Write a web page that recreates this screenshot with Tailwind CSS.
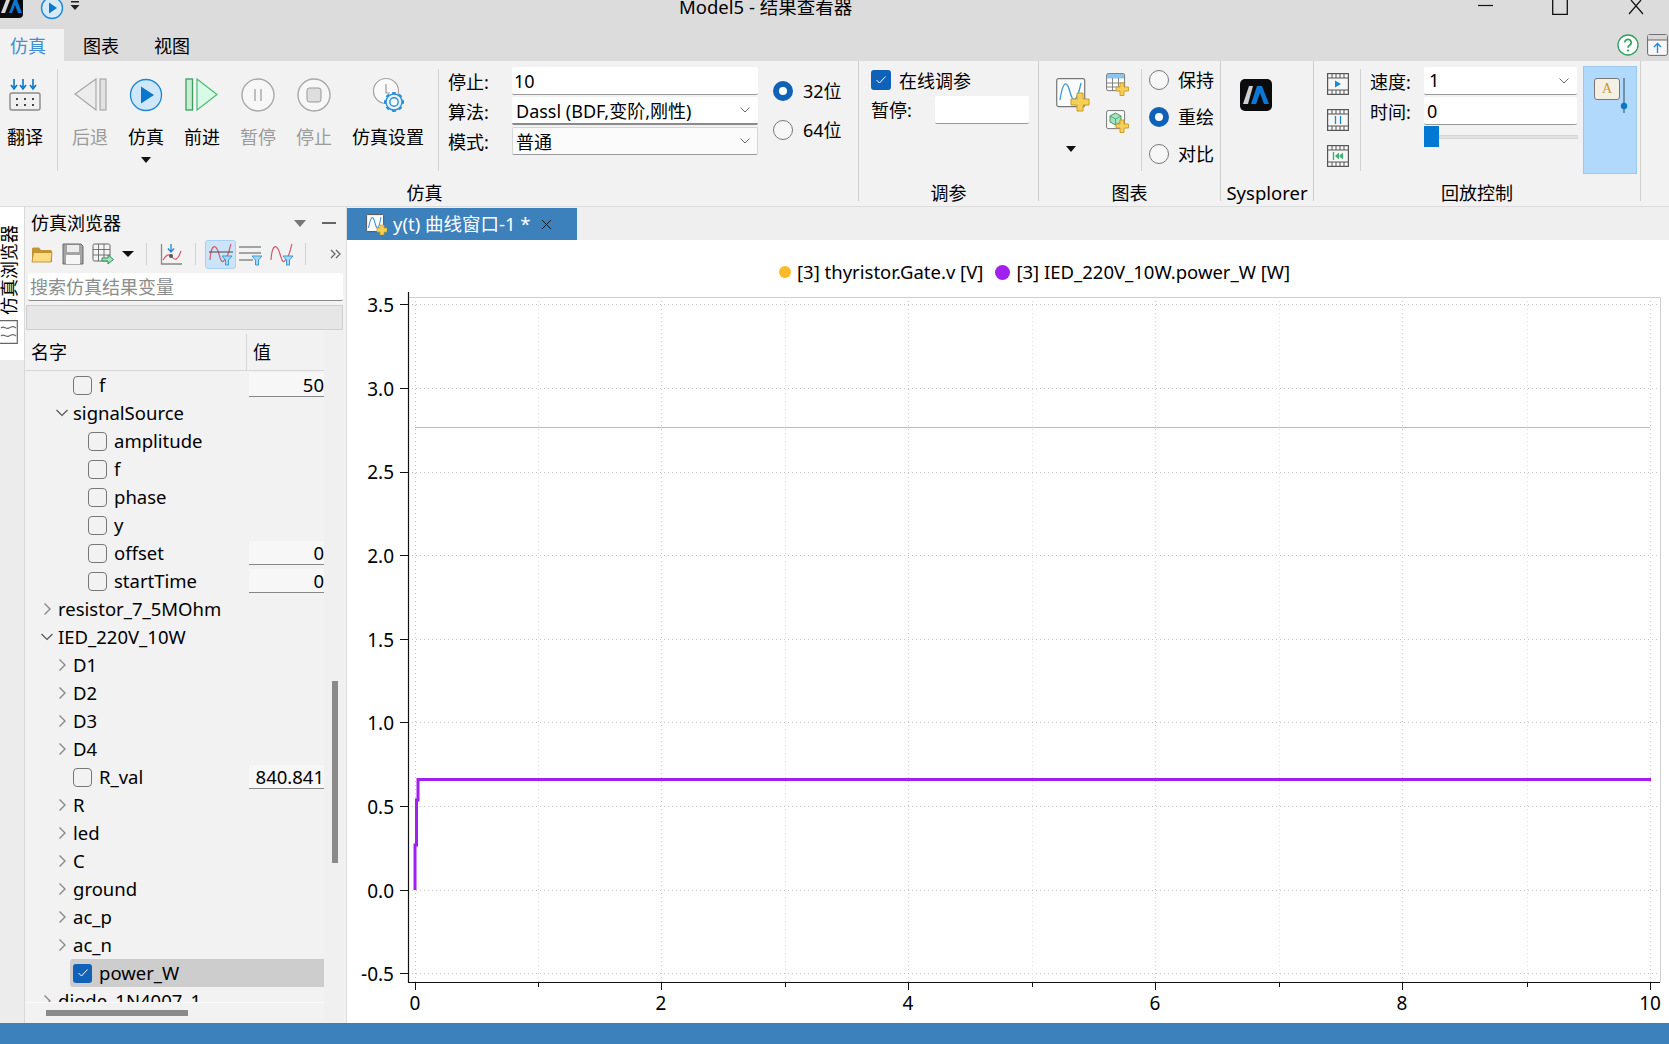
<!DOCTYPE html>
<html lang="zh">
<head>
    <meta charset="UTF-8">
    <title>Model5 - 结果查看器</title>
    <script src="https://cdn.jsdelivr.net/npm/@tailwindcss/browser@4"></script>
</head>
<body class="w-[1669px] h-[1044px] overflow-hidden flex flex-col bg-[#f2f2f2] text-[18px] text-black font-['Noto_Sans','Noto_Sans_CJK_SC',sans-serif]">

    <!-- Title bar -->
    <div class="h-[29px] flex items-start bg-[#dcdcdc] overflow-hidden shrink-0">
        <svg class="w-[23px] h-[19px] shrink-0" viewBox="0 0 23 19">
            <path d="M0 0H23V14a4 4 0 0 1-4 4H0Z" fill="#0b0b0d"/>
            <path d="M6 0H10L5 13H1Z" fill="#d8d8d8"/>
            <path d="M14 0H17L22 13H18L15 5L12 13H9Z" fill="#0a78d4"/>
        </svg>
        <svg class="w-[24px] h-[24px] ml-[17px] shrink-0 -mt-[4px]" viewBox="0 0 24 24">
            <circle cx="12" cy="12" r="10.5" fill="#d4e9fa" stroke="#2186d4" stroke-width="1.4"/>
            <path d="M9 6.5L17 12L9 17.5Z" fill="#0a78c8"/>
        </svg>
        <svg class="w-[10px] h-[12px] ml-[6px] shrink-0" viewBox="0 0 10 12">
            <rect x="1" y="1" width="8" height="1.5" fill="#222"/>
            <path d="M0.5 5H9.5L5 10Z" fill="#222"/>
        </svg>
        <div class="ml-[599px] -mt-[6px] text-[18.5px] leading-[26px] w-[799px] shrink-0 whitespace-nowrap">Model5 - 结果查看器</div>
        <svg class="w-[15px] h-[14px] shrink-0" viewBox="0 0 15 14"><path d="M0 5.5H15" stroke="#111" stroke-width="1.2"/></svg>
        <svg class="w-[16px] h-[15px] ml-[59px] shrink-0" viewBox="0 0 16 15"><path d="M0.7 0V14.3H15.3V0" fill="none" stroke="#111" stroke-width="1.3"/></svg>
        <svg class="w-[16px] h-[15px] ml-[60px] shrink-0" viewBox="0 0 16 15"><path d="M3 0L15 14M13 0L1 14" stroke="#111" stroke-width="1.2"/></svg>
    </div>

    <!-- Menu tabs -->
    <div class="h-[32px] flex items-stretch bg-[#dcdcdc] shrink-0">
        <div class="w-[64px] bg-[#f2f2f2] flex items-center pl-[10px] pt-[2px] text-[#3f8fd2]">仿真</div>
        <div class="ml-[19px] flex items-center pt-[2px]">图表</div>
        <div class="ml-[35px] flex items-center pt-[2px]">视图</div>
        <div class="ml-auto flex items-center">
            <svg class="w-[22px] h-[22px]" viewBox="0 0 22 22">
                <circle cx="11" cy="11" r="10" fill="#fff" stroke="#2f9e5c" stroke-width="1.3"/>
                <path d="M7.8 8.5a3.2 3.2 0 1 1 4.8 2.8c-1 .6-1.6 1.1-1.6 2.4" fill="none" stroke="#2f9e5c" stroke-width="1.7"/>
                <circle cx="11" cy="16.5" r="1.1" fill="#2f9e5c"/>
            </svg>
            <svg class="w-[21px] h-[22px] ml-[8px] mr-[1px]" viewBox="0 0 21 22">
                <rect x=".6" y=".6" width="19.8" height="20.8" rx="2" fill="#f7f7f7" stroke="#666"/>
                <rect x="1" y="1" width="19" height="5" fill="#d8d8d8"/>
                <path d="M1 6H20" stroke="#666"/>
                <path d="M10.5 19V10M7 13L10.5 9.5L14 13" fill="none" stroke="#1b87d8" stroke-width="1.3"/>
            </svg>
        </div>
    </div>

    <!-- Ribbon -->
    <div class="h-[146px] flex bg-[#f2f2f2] border-b border-[#dcdcdc] shrink-0">

        <!-- 仿真 group -->
        <div class="w-[859px] h-[140px] flex flex-col border-r border-[#cfcfcf] shrink-0">
            <div class="h-[118px] flex items-start shrink-0">
                <div class="w-[50px] shrink-0 flex flex-col items-center">
                    <svg class="w-[34px] h-[38px] mt-[15px]" viewBox="0 0 34 38">
                        <path d="M6 3V11M3 9L6 13L9 9M15 3V11M12 9L15 13L18 9M25 3V11M22 9L25 13L28 9" fill="none" stroke="#0a78c8" stroke-width="1.6"/>
                        <rect x="2" y="17" width="30" height="17" rx="2" fill="#f0f0f0" stroke="#8a8a8a" stroke-width="1.4"/>
                        <path d="M8 22h2v2H8ZM16 22h2v2h-2ZM24 22h2v2h-2ZM8 28h2v2H8ZM16 28h2v2h-2ZM24 28h2v2h-2Z" fill="#444"/>
                    </svg>
                    <div class="mt-[11px] leading-[24px]">翻译</div>
                </div>
                <div class="w-px h-[102px] mt-[8px] ml-[7px] bg-[#d2d2d2] shrink-0"></div>
                <div class="flex ml-[4px] shrink-0 items-start">
                    <div class="w-[56px] flex flex-col items-center text-[#9b9b9b]">
                        <svg class="w-[38px] h-[38px] mt-[15px]" viewBox="0 0 38 38">
                            <path d="M4 18L25 3V34Z" fill="#ececec" stroke="#a8a8a8" stroke-width="1.2"/>
                            <rect x="29" y="3" width="6" height="31" fill="#e2e2e2" stroke="#a8a8a8" stroke-width="1.2"/>
                        </svg>
                        <div class="mt-[11px] leading-[24px]">后退</div>
                    </div>
                    <div class="w-[56px] flex flex-col items-center">
                        <svg class="w-[38px] h-[38px] mt-[15px]" viewBox="0 0 38 38">
                            <circle cx="19" cy="19" r="15.5" fill="#cfe7fb" stroke="#1b87d4" stroke-width="1.3"/>
                            <path d="M14 10.5L27 19L14 27.5Z" fill="#0a78c8"/>
                        </svg>
                        <div class="mt-[11px] leading-[24px]">仿真</div>
                        <div class="mt-[8px] w-0 h-0 border-x-[5px] border-x-transparent border-t-[6px] border-t-[#111]"></div>
                    </div>
                    <div class="w-[56px] flex flex-col items-center">
                        <svg class="w-[38px] h-[38px] mt-[15px]" viewBox="0 0 38 38">
                            <rect x="3" y="3" width="6.5" height="31" fill="#c5efd2" stroke="#3f9a60" stroke-width="1.3"/>
                            <path d="M14 3L34 18.5L14 34Z" fill="#d8fbe7" stroke="#4dbb74" stroke-width="1.2"/>
                        </svg>
                        <div class="mt-[11px] leading-[24px]">前进</div>
                    </div>
                    <div class="w-[56px] flex flex-col items-center text-[#9b9b9b]">
                        <svg class="w-[38px] h-[38px] mt-[15px]" viewBox="0 0 38 38">
                            <circle cx="19" cy="19" r="16" fill="#f7f7f7" stroke="#a8a8a8" stroke-width="1.4"/>
                            <path d="M16 13V25M22 13V25" stroke="#999" stroke-width="1.2"/>
                        </svg>
                        <div class="mt-[11px] leading-[24px]">暂停</div>
                    </div>
                    <div class="w-[56px] flex flex-col items-center text-[#9b9b9b]">
                        <svg class="w-[38px] h-[38px] mt-[15px]" viewBox="0 0 38 38">
                            <circle cx="19" cy="19" r="16" fill="#f7f7f7" stroke="#a8a8a8" stroke-width="1.4"/>
                            <rect x="12" y="12" width="14" height="14" rx="2.5" fill="#dedede" stroke="#999"/>
                        </svg>
                        <div class="mt-[11px] leading-[24px]">停止</div>
                    </div>
                    <div class="w-[92px] flex flex-col items-center">
                        <svg class="w-[38px] h-[38px] mt-[15px]" viewBox="0 0 38 38">
                            <circle cx="17" cy="15" r="12.5" fill="#fafafa" stroke="#a0a0a0" stroke-width="1.2"/>
                            <path d="M17 8V17H21" fill="none" stroke="#999" stroke-width="1.2"/>
                            <path d="M25 16V36M15 26H35M18 19L32 33M32 19L18 33" stroke="#2a8fd8" stroke-width="3.6"/>
                            <circle cx="25" cy="26" r="8" fill="#eaf4fc" stroke="#2a8fd8" stroke-width="1.4"/>
                            <circle cx="25" cy="26" r="4.2" fill="#f8fbff" stroke="#2a8fd8" stroke-width="1.4"/>
                        </svg>
                        <div class="mt-[11px] leading-[24px]">仿真设置</div>
                    </div>
                </div>
                <div class="w-px h-[102px] mt-[8px] ml-[4px] bg-[#d2d2d2] shrink-0"></div>

                <!-- Simulation form -->
                <div class="mt-[6px] ml-[9px] w-[310px] flex flex-col gap-[2px] shrink-0">
                    <div class="flex items-center h-[28px]">
                        <div class="w-[64px] pt-[2px]">停止:</div>
                        <div class="w-[246px] h-full bg-white border-b border-[#999] rounded-[2px] pl-[2px] leading-[28px]">10</div>
                    </div>
                    <div class="flex items-center h-[28px]">
                        <div class="w-[64px] pt-[2px]">算法:</div>
                        <div class="w-[246px] h-full bg-white border-b-2 border-[#8a8a8a] rounded-[2px] pl-[4px] flex items-center justify-between pr-[7px]">
                            <span class="pt-[2px] whitespace-nowrap">Dassl (BDF,变阶,刚性)</span>
                            <svg class="w-[12px] h-[8px]" viewBox="0 0 12 8"><path d="M1.5 1.5L6 6L10.5 1.5" fill="none" stroke="#666" stroke-width="1"/></svg>
                        </div>
                    </div>
                    <div class="flex items-center h-[28px]">
                        <div class="w-[64px] pt-[2px]">模式:</div>
                        <div class="w-[246px] h-full bg-[#fbfbfb] border border-[#d6d6d6] border-b-[#9a9a9a] rounded-[2px] pl-[3px] flex items-center justify-between pr-[6px]">
                            <span class="pt-[2px]">普通</span>
                            <svg class="w-[12px] h-[8px]" viewBox="0 0 12 8"><path d="M1.5 1.5L6 6L10.5 1.5" fill="none" stroke="#666" stroke-width="1"/></svg>
                        </div>
                    </div>
                </div>

                <!-- Bitness radios -->
                <div class="ml-[15px] mt-[19px] flex flex-col gap-[17px] shrink-0">
                    <div class="flex items-center h-[22px] gap-[10px]">
                        <div class="w-[20px] h-[20px] rounded-full border-[6px] border-[#0f62b8] bg-white"></div>
                        <span>32位</span>
                    </div>
                    <div class="flex items-center h-[22px] gap-[10px]">
                        <div class="w-[20px] h-[20px] rounded-full border border-[#777] bg-[#f7f7f7]"></div>
                        <span>64位</span>
                    </div>
                </div>
            </div>
            <div class="pr-[9px] text-center leading-[24px] mt-[2px]">仿真</div>
        </div>

        <!-- 调参 group -->
        <div class="w-[180px] h-[140px] flex flex-col border-r border-[#cfcfcf] shrink-0">
            <div class="h-[118px] pl-[12px] pt-[9px] shrink-0">
                <div class="flex items-center h-[20px] gap-[8px]">
                    <div class="w-[20px] h-[20px] rounded-[3px] bg-[#0f62b8] flex items-center justify-center">
                        <svg class="w-[12px] h-[10px]" viewBox="0 0 12 10"><path d="M1.5 5L4.5 8L10.5 1.5" fill="none" stroke="#fff" stroke-width="1"/></svg>
                    </div>
                    <span class="pt-[2px]">在线调参</span>
                </div>
                <div class="flex items-center mt-[5px]">
                    <div class="w-[64px] pt-[2px]">暂停:</div>
                    <div class="w-[94px] h-[28px] bg-white border-b border-[#999] rounded-[2px]"></div>
                </div>
            </div>
            <div class="text-center leading-[24px] mt-[2px]">调参</div>
        </div>

        <!-- 图表 group -->
        <div class="w-[182px] h-[140px] flex flex-col border-r border-[#cfcfcf] shrink-0">
            <div class="h-[118px] flex items-start shrink-0">
                <div class="ml-[17px] mt-[17px] flex flex-col items-center w-[34px] shrink-0">
                    <svg class="w-[34px] h-[35px]" viewBox="0 0 34 35">
                        <rect x=".7" y=".7" width="28" height="28" rx="2" fill="#fdfdfd" stroke="#777" stroke-width="1.2"/>
                        <path d="M4 22C7 2 11 2 14 14S21 24 25 5" fill="none" stroke="#3b97dc" stroke-width="1.3"/>
                        <path d="M15 21H21V15H27V21H33V27H27V33H21V27H15Z" fill="#f6cf57" stroke="#c99a25"/>
                    </svg>
                    <div class="mt-[33px] -ml-[4px] w-0 h-0 border-x-[5px] border-x-transparent border-t-[6px] border-t-[#111]"></div>
                </div>
                <div class="ml-[16px] mt-[12px] flex flex-col gap-[14px] shrink-0">
                    <svg class="w-[23px] h-[23px]" viewBox="0 0 23 23">
                        <rect x=".6" y=".6" width="18" height="17" rx="1.5" fill="#fff" stroke="#777"/>
                        <rect x="1" y="1" width="17" height="4.5" fill="#8cc4ee"/>
                        <path d="M1 10H18M1 14H18M6.5 5V18M12.5 5V18" stroke="#777" stroke-width=".9"/>
                        <path d="M10 14H14V10H18V14H22.5V18H18V22.5H14V18H10Z" fill="#f6cf57" stroke="#c99a25" stroke-width=".9"/>
                    </svg>
                    <svg class="w-[23px] h-[23px]" viewBox="0 0 23 23">
                        <rect x=".6" y=".6" width="18" height="18" rx="1.5" fill="#fff" stroke="#777"/>
                        <path d="M9.5 3L15 6V12L9.5 15L4 12V6Z" fill="#a6e2bf" stroke="#3f9a60"/>
                        <path d="M4 6L9.5 9L15 6M9.5 9V15" fill="none" stroke="#3f9a60" stroke-width=".8"/>
                        <path d="M10 14H14V10H18V14H22.5V18H18V22.5H14V18H10Z" fill="#f6cf57" stroke="#c99a25" stroke-width=".9"/>
                    </svg>
                </div>
                <div class="w-px h-[102px] mt-[8px] ml-[12px] bg-[#d2d2d2] shrink-0"></div>
                <div class="ml-[7px] mt-[9px] flex flex-col gap-[17px] shrink-0">
                    <div class="flex items-center h-[20px] gap-[9px]">
                        <div class="w-[20px] h-[20px] rounded-full border border-[#777] bg-[#f7f7f7]"></div>
                        <span>保持</span>
                    </div>
                    <div class="flex items-center h-[20px] gap-[9px]">
                        <div class="w-[20px] h-[20px] rounded-full border-[6px] border-[#0f62b8] bg-white"></div>
                        <span>重绘</span>
                    </div>
                    <div class="flex items-center h-[20px] gap-[9px]">
                        <div class="w-[20px] h-[20px] rounded-full border border-[#777] bg-[#f7f7f7]"></div>
                        <span>对比</span>
                    </div>
                </div>
            </div>
            <div class="text-center leading-[24px] mt-[2px]">图表</div>
        </div>

        <!-- Sysplorer group -->
        <div class="w-[93px] h-[140px] flex flex-col border-r border-[#cfcfcf] shrink-0">
            <div class="h-[118px] pl-[19px] pt-[18px] shrink-0">
                <svg class="w-[32px] h-[32px]" viewBox="0 0 32 32">
                    <rect width="32" height="32" rx="5" fill="#0b0b0d"/>
                    <path d="M9 7H13L8 25H3Z" fill="#cfcfcf"/>
                    <path d="M17 7H22L29 25H24L20 14L16 25H11Z" fill="#0a78d4"/>
                </svg>
            </div>
            <div class="text-center text-[18.5px] leading-[24px] mt-[2px]">Sysplorer</div>
        </div>

        <!-- 回放控制 group -->
        <div class="w-[327px] h-[140px] flex flex-col border-r border-[#cfcfcf] shrink-0">
            <div class="h-[118px] flex items-start shrink-0">
                <div class="ml-[13px] mt-[12px] flex flex-col gap-[14px] shrink-0">
                    <svg class="w-[22px] h-[22px]" viewBox="0 0 22 22">
                        <rect x=".6" y=".6" width="20.8" height="20.8" fill="#f7f7f7" stroke="#555" stroke-width="1.2"/>
                        <path d="M1 5H21M1 17H21M5 1V5M9 1V5M13 1V5M17 1V5M5 17V21M9 17V21M13 17V21M17 17V21" stroke="#555"/>
                        <path d="M8 7.5L14 11L8 14.5Z" fill="#1b87d8"/>
                    </svg>
                    <svg class="w-[22px] h-[22px]" viewBox="0 0 22 22">
                        <rect x=".6" y=".6" width="20.8" height="20.8" fill="#f7f7f7" stroke="#555" stroke-width="1.2"/>
                        <path d="M1 5H21M1 17H21M5 1V5M9 1V5M13 1V5M17 1V5M5 17V21M9 17V21M13 17V21M17 17V21" stroke="#555"/>
                        <path d="M8.5 7V15M13.5 7V15" stroke="#1b87d8" stroke-width="1.3"/>
                    </svg>
                    <svg class="w-[22px] h-[22px]" viewBox="0 0 22 22">
                        <rect x=".6" y=".6" width="20.8" height="20.8" fill="#f7f7f7" stroke="#555" stroke-width="1.2"/>
                        <path d="M1 5H21M1 17H21M5 1V5M9 1V5M13 1V5M17 1V5M5 17V21M9 17V21M13 17V21M17 17V21" stroke="#555"/>
                        <path d="M6.5 7V15" stroke="#3fb070" stroke-width="1.4"/>
                        <path d="M12 7.5L8 11L12 14.5ZM16 7.5L12 11L16 14.5Z" fill="#3fb070"/>
                    </svg>
                </div>
                <div class="w-px h-[102px] mt-[8px] ml-[11px] bg-[#d2d2d2] shrink-0"></div>
                <div class="ml-[9px] mt-[6px] w-[207px] flex flex-col gap-[2px] shrink-0">
                    <div class="flex items-center h-[28px]">
                        <div class="w-[54px] pt-[2px]">速度:</div>
                        <div class="w-[153px] h-full bg-white border-b border-[#999] rounded-[2px] pl-[5px] flex items-center justify-between pr-[7px]">
                            <span>1</span>
                            <svg class="w-[12px] h-[8px]" viewBox="0 0 12 8"><path d="M1.5 1.5L6 6L10.5 1.5" fill="none" stroke="#666" stroke-width="1"/></svg>
                        </div>
                    </div>
                    <div class="flex items-center h-[28px]">
                        <div class="w-[54px] pt-[2px]">时间:</div>
                        <div class="w-[153px] h-full bg-white border-b border-[#999] rounded-[2px] pl-[3px] leading-[28px]">0</div>
                    </div>
                    <div class="ml-[54px] w-[154px] h-[21px] -mt-[1px] flex items-center">
                        <div class="w-[15px] h-full bg-[#0078d4] shrink-0"></div>
                        <div class="flex-1 h-[4px] bg-[#e3e3e3] border border-[#d5d5d5]"></div>
                    </div>
                </div>
                <div class="ml-[6px] mt-[5px] w-[54px] h-[108px] bg-[#b0d9fb] border border-[#9cc8ea] shrink-0 flex items-start pl-[10px] pt-[11px]">
                    <div class="w-[26px] h-[22px] bg-[#f5f0e4] border border-[#777] rounded-[3px] flex items-center justify-center text-[14px] leading-none text-[#c8962a] font-['Liberation_Serif',serif]">A</div>
                    <svg class="w-[8px] h-[35px]" viewBox="0 0 8 35">
                        <path d="M4 0V35" stroke="#607d96" stroke-width="1.6"/>
                        <circle cx="4" cy="28" r="3.2" fill="#0a78c8"/>
                    </svg>
                </div>
            </div>
            <div class="text-center leading-[24px] mt-[2px]">回放控制</div>
        </div>
    </div>

    <!-- Main area -->
    <div class="flex-1 flex min-h-0">

        <!-- Docked tab strip -->
        <div class="w-[24px] shrink-0 bg-[#ececec]">
            <div class="w-[24px] h-[153px] bg-white overflow-hidden flex flex-col items-start">
                <div class="w-[18px] h-[92px] mt-[16px] whitespace-nowrap leading-[18px] [writing-mode:vertical-rl] [text-orientation:sideways] rotate-180">仿真浏览器</div>
                <svg class="w-[18px] h-[24px] mt-[5px]" viewBox="0 0 18 24">
                    <path d="M0 .7H17.3V23.3H0" fill="none" stroke="#666" stroke-width="1.2"/>
                    <path d="M1 8c3-3 5 2 8 0s5-2 7 0M1 16c3-3 5 2 8 0s5-2 7 0" fill="none" stroke="#666" stroke-width="1.1"/>
                </svg>
            </div>
        </div>

        <!-- Simulation browser -->
        <div class="w-[320px] shrink-0 flex flex-col border-l border-[#d9d9d9] bg-[#f2f2f2] overflow-hidden">
            <div class="h-[32px] flex items-center pl-[6px] shrink-0">
                <span>仿真浏览器</span>
                <div class="ml-auto w-0 h-0 border-x-[6px] border-x-transparent border-t-[7px] border-t-[#777]"></div>
                <div class="ml-[16px] mr-[8px] w-[14px] h-[1.5px] bg-[#666]"></div>
            </div>
            <div class="h-[30px] flex items-center pl-[6px] shrink-0">
                <svg class="w-[22px] h-[22px] shrink-0" viewBox="0 0 22 22">
                    <path d="M1 6a1.5 1.5 0 0 1 1.5-1.5H8L10 7H19.500a1.500 1.500 0 0 1 1.500 1.500V19H1Z" fill="#c49432"/>
                    <path d="M1 19L2.500 9.500H21L20 19Z" fill="#fbdc82" stroke="#b8862a" stroke-width=".8"/>
                </svg>
                <svg class="w-[22px] h-[22px] ml-[9px] shrink-0" viewBox="0 0 22 22">
                    <path d="M1 1H19L21 3V21H1Z" fill="#a4a4a4" stroke="#6a6a6a"/>
                    <rect x="5" y="2" width="12" height="7" fill="#ececec"/>
                    <rect x="4" y="12" width="14" height="9" fill="#f6f6f6"/>
                </svg>
                <svg class="w-[22px] h-[22px] ml-[8px] shrink-0" viewBox="0 0 22 22">
                    <rect x="1" y="1" width="17" height="17" rx="1.500" fill="#f4f4f4" stroke="#666"/>
                    <path d="M1 6.500H18M1 12H18M6.500 1V18M12 1V18" stroke="#666" stroke-width=".9"/>
                    <path d="M10 15H16V12L21.500 16.500L16 21V18H10Z" fill="#a6e2bf" stroke="#2f8f55"/>
                </svg>
                <div class="ml-[8px] w-0 h-0 border-x-[6px] border-x-transparent border-t-[6px] border-t-[#111]"></div>
                <div class="ml-[12px] w-px h-[22px] bg-[#d2d2d2]"></div>
                <svg class="w-[22px] h-[24px] ml-[13px] shrink-0" viewBox="0 0 22 24">
                    <path d="M1.500 2V22H22" fill="none" stroke="#888" stroke-width="1.300"/>
                    <path d="M3 18C6 13 9 11 12 15S18 18 21 9" fill="none" stroke="#d8566c" stroke-width="1.200"/>
                    <circle cx="11" cy="14" r="2" fill="#555"/>
                    <path d="M11 2V9M8 6.500L11 10L14 6.500" fill="none" stroke="#1b87d8" stroke-width="1.300"/>
                </svg>
                <div class="ml-[13px] w-px h-[22px] bg-[#d2d2d2]"></div>
                <div class="ml-[9px] w-[31px] h-[29px] bg-[#cce4f7] border border-[#a8d2f2] rounded-[3px] flex items-center justify-center shrink-0">
                    <svg class="w-[24px] h-[24px]" viewBox="0 0 24 24">
                        <path d="M1 18C2 2 7 1 10 12S14 20 17 16 20 8 22 2" fill="none" stroke="#d8566c" stroke-width="1.200"/>
                        <path d="M0 10H24" stroke="#555" stroke-width="1.100"/>
                        <path d="M13 14H23L19.500 18V23H16.500V18Z" fill="#a8d8f7" stroke="#3a98d8"/>
                    </svg>
                </div>
                <svg class="w-[23px] h-[24px] ml-[3px] shrink-0" viewBox="0 0 23 24">
                    <path d="M0 5H22M0 11H22M0 18H14" stroke="#555" stroke-width="1.100"/>
                    <path d="M13 14H23L19.500 18V23H16.500V18Z" fill="#a8d8f7" stroke="#3a98d8"/>
                </svg>
                <svg class="w-[23px] h-[24px] ml-[8px] shrink-0" viewBox="0 0 23 24">
                    <path d="M1 18C2 2 7 1 10 12S14 20 17 16 20 8 22 2" fill="none" stroke="#d8566c" stroke-width="1.200"/>
                    <path d="M13 14H23L19.500 18V23H16.500V18Z" fill="#a8d8f7" stroke="#3a98d8"/>
                </svg>
                <div class="ml-[12px] w-px h-[22px] bg-[#d2d2d2]"></div>
                <svg class="w-[11px] h-[10px] ml-[24px] shrink-0" viewBox="0 0 11 10"><path d="M1 1L5 5L1 9M6 1L10 5L6 9" fill="none" stroke="#666" stroke-width="1.300"/></svg>
            </div>
            <div class="h-[28px] ml-[3px] mr-[1px] mt-[4px] bg-white border-b border-[#8a8a8a] rounded-[2px] pl-[2px] leading-[28px] text-[#8d8d8d] shrink-0">搜索仿真结果变量</div>
            <div class="h-[25px] mt-[4px] ml-px w-[317px] bg-[#e6e6e6] border border-[#cfcfcf] shrink-0"></div>

            <div class="flex flex-1 min-h-0">
                <div class="w-[299px] shrink-0 flex flex-col">
                    <!-- Header -->
                    <div class="h-[37px] mt-[4px] flex items-center border-b border-[#d6d6d6] shrink-0">
                        <div class="w-[222px] pl-[6px] h-full flex items-center border-r border-[#d6d6d6]">名字</div>
                        <div class="pl-[6px]">值</div>
                    </div>
                    <!-- Tree -->
                    <div class="h-[631px] overflow-hidden shrink-0 text-[18.5px]">
                        <div class="h-[28px] flex items-center pl-[48px]">
                            <div class="w-[19px] h-[19px] rounded-[4px] border border-[#777] mr-[7px]"></div><span>f</span>
                            <div class="ml-auto w-[75px] h-[24px] bg-[#f7f7f7] border-b border-[#888] text-right leading-[24px]">50</div>
                        </div>
                        <div class="h-[28px] flex items-center pl-[29px]">
                            <svg class="w-[16px] h-[16px] mr-[3px]" viewBox="0 0 16 16"><path d="M2.500 5L8 10.500L13.500 5" fill="none" stroke="#555" stroke-width="1.200"/></svg><span>signalSource</span>
                        </div>
                        <div class="h-[28px] flex items-center pl-[63px]">
                            <div class="w-[19px] h-[19px] rounded-[4px] border border-[#777] mr-[7px]"></div><span>amplitude</span>
                        </div>
                        <div class="h-[28px] flex items-center pl-[63px]">
                            <div class="w-[19px] h-[19px] rounded-[4px] border border-[#777] mr-[7px]"></div><span>f</span>
                        </div>
                        <div class="h-[28px] flex items-center pl-[63px]">
                            <div class="w-[19px] h-[19px] rounded-[4px] border border-[#777] mr-[7px]"></div><span>phase</span>
                        </div>
                        <div class="h-[28px] flex items-center pl-[63px]">
                            <div class="w-[19px] h-[19px] rounded-[4px] border border-[#777] mr-[7px]"></div><span>y</span>
                        </div>
                        <div class="h-[28px] flex items-center pl-[63px]">
                            <div class="w-[19px] h-[19px] rounded-[4px] border border-[#777] mr-[7px]"></div><span>offset</span>
                            <div class="ml-auto w-[75px] h-[24px] bg-[#f7f7f7] border-b border-[#888] text-right leading-[24px]">0</div>
                        </div>
                        <div class="h-[28px] flex items-center pl-[63px]">
                            <div class="w-[19px] h-[19px] rounded-[4px] border border-[#777] mr-[7px]"></div><span>startTime</span>
                            <div class="ml-auto w-[75px] h-[24px] bg-[#f7f7f7] border-b border-[#888] text-right leading-[24px]">0</div>
                        </div>
                        <div class="h-[28px] flex items-center pl-[14px]">
                            <svg class="w-[16px] h-[16px] mr-[3px]" viewBox="0 0 16 16"><path d="M5.500 2.500L11 8L5.500 13.500" fill="none" stroke="#888" stroke-width="1.400"/></svg><span>resistor_7_5MOhm</span>
                        </div>
                        <div class="h-[28px] flex items-center pl-[14px]">
                            <svg class="w-[16px] h-[16px] mr-[3px]" viewBox="0 0 16 16"><path d="M2.500 5L8 10.500L13.500 5" fill="none" stroke="#555" stroke-width="1.200"/></svg><span>IED_220V_10W</span>
                        </div>
                        <div class="h-[28px] flex items-center pl-[29px]">
                            <svg class="w-[16px] h-[16px] mr-[3px]" viewBox="0 0 16 16"><path d="M5.500 2.500L11 8L5.500 13.500" fill="none" stroke="#888" stroke-width="1.400"/></svg><span>D1</span>
                        </div>
                        <div class="h-[28px] flex items-center pl-[29px]">
                            <svg class="w-[16px] h-[16px] mr-[3px]" viewBox="0 0 16 16"><path d="M5.500 2.500L11 8L5.500 13.500" fill="none" stroke="#888" stroke-width="1.400"/></svg><span>D2</span>
                        </div>
                        <div class="h-[28px] flex items-center pl-[29px]">
                            <svg class="w-[16px] h-[16px] mr-[3px]" viewBox="0 0 16 16"><path d="M5.500 2.500L11 8L5.500 13.500" fill="none" stroke="#888" stroke-width="1.400"/></svg><span>D3</span>
                        </div>
                        <div class="h-[28px] flex items-center pl-[29px]">
                            <svg class="w-[16px] h-[16px] mr-[3px]" viewBox="0 0 16 16"><path d="M5.500 2.500L11 8L5.500 13.500" fill="none" stroke="#888" stroke-width="1.400"/></svg><span>D4</span>
                        </div>
                        <div class="h-[28px] flex items-center pl-[48px]">
                            <div class="w-[19px] h-[19px] rounded-[4px] border border-[#777] mr-[7px]"></div><span>R_val</span>
                            <div class="ml-auto w-[75px] h-[24px] bg-[#f7f7f7] border-b border-[#888] text-right leading-[24px]">840.841</div>
                        </div>
                        <div class="h-[28px] flex items-center pl-[29px]">
                            <svg class="w-[16px] h-[16px] mr-[3px]" viewBox="0 0 16 16"><path d="M5.500 2.500L11 8L5.500 13.500" fill="none" stroke="#888" stroke-width="1.400"/></svg><span>R</span>
                        </div>
                        <div class="h-[28px] flex items-center pl-[29px]">
                            <svg class="w-[16px] h-[16px] mr-[3px]" viewBox="0 0 16 16"><path d="M5.500 2.500L11 8L5.500 13.500" fill="none" stroke="#888" stroke-width="1.400"/></svg><span>led</span>
                        </div>
                        <div class="h-[28px] flex items-center pl-[29px]">
                            <svg class="w-[16px] h-[16px] mr-[3px]" viewBox="0 0 16 16"><path d="M5.500 2.500L11 8L5.500 13.500" fill="none" stroke="#888" stroke-width="1.400"/></svg><span>C</span>
                        </div>
                        <div class="h-[28px] flex items-center pl-[29px]">
                            <svg class="w-[16px] h-[16px] mr-[3px]" viewBox="0 0 16 16"><path d="M5.500 2.500L11 8L5.500 13.500" fill="none" stroke="#888" stroke-width="1.400"/></svg><span>ground</span>
                        </div>
                        <div class="h-[28px] flex items-center pl-[29px]">
                            <svg class="w-[16px] h-[16px] mr-[3px]" viewBox="0 0 16 16"><path d="M5.500 2.500L11 8L5.500 13.500" fill="none" stroke="#888" stroke-width="1.400"/></svg><span>ac_p</span>
                        </div>
                        <div class="h-[28px] flex items-center pl-[29px]">
                            <svg class="w-[16px] h-[16px] mr-[3px]" viewBox="0 0 16 16"><path d="M5.500 2.500L11 8L5.500 13.500" fill="none" stroke="#888" stroke-width="1.400"/></svg><span>ac_n</span>
                        </div>
                        <div class="h-[28px] flex items-center ml-[45px] pl-[3px] bg-[#cdcdcd] rounded-l-[3px]">
                            <div class="w-[19px] h-[19px] rounded-[3px] bg-[#0f62b8] flex items-center justify-center mr-[7px]">
                                <svg class="w-[12px] h-[10px]" viewBox="0 0 12 10"><path d="M1.500 5L4.500 8L10.500 1.500" fill="none" stroke="#fff" stroke-width="1"/></svg>
                            </div><span>power_W</span>
                        </div>
                        <div class="h-[28px] flex items-center pl-[14px]">
                            <svg class="w-[16px] h-[16px] mr-[3px]" viewBox="0 0 16 16"><path d="M5.500 2.500L11 8L5.500 13.500" fill="none" stroke="#888" stroke-width="1.400"/></svg><span>diode_1N4007_1</span>
                        </div>
                    </div>
                    <!-- Horizontal scrollbar -->
                    <div class="flex-1 pt-[7px] pl-[21px] border-t border-[#fafafa]">
                        <div class="w-[142px] h-[6px] bg-[#8a8a8a]"></div>
                    </div>
                </div>
                <!-- Vertical scrollbar -->
                <div class="flex-1 bg-[#f0f0f0] pl-[8px]">
                    <div class="w-[6px] h-[182px] mt-[351px] bg-[#8a8a8a]"></div>
                </div>
            </div>
        </div>

        <!-- Chart window -->
        <div class="flex-1 min-w-0 flex flex-col ml-[2px] border-l border-[#dcdcdc] bg-white">
            <div class="h-[33px] flex items-end bg-[#efefef] shrink-0">
                <div class="w-[230px] h-[32px] bg-[#3c80bc] text-white text-[18.5px] flex items-center pl-[19px]">
                    <svg class="w-[21px] h-[21px] shrink-0" viewBox="0 0 21 21">
                        <rect x=".6" y=".6" width="17" height="17" rx="1" fill="#fdfdfd" stroke="#555"/>
                        <path d="M2.500 14C5 1 7 1 9 9S13 15 15 3" fill="none" stroke="#3b97dc" stroke-width="1.100"/>
                        <path d="M11 14H14V11H18V14H21V18H18V21H14V18H11Z" fill="#f6cf57" stroke="#c99a25" stroke-width=".7"/>
                    </svg>
                    <span class="ml-[6px] whitespace-nowrap">y(t) 曲线窗口-1 *</span>
                    <svg class="w-[11px] h-[11px] ml-[10px] shrink-0" viewBox="0 0 11 11"><path d="M1 1L10 10M10 1L1 10" stroke="#1a1a1a" stroke-width="1"/></svg>
                </div>
            </div>
            <div class="h-[50px] pt-[14px] flex items-center pl-[432px] gap-[6px] text-[18.5px] shrink-0 whitespace-nowrap">
                <div class="w-[12px] h-[12px] rounded-full bg-[#fdbb2a]"></div>
                <span>[3] thyristor.Gate.v [V]</span>
                <div class="ml-[6px] w-[15px] h-[15px] rounded-full bg-[#a020f0]"></div>
                <span>[3] IED_220V_10W.power_W [W]</span>
            </div>
            <svg class="block w-[1322px] h-[731px] shrink-0" viewBox="347 290 1322 731">
                <!-- grid -->
                <g stroke="#c4c4c4" stroke-width="1" stroke-dasharray="1 3">
                    <path d="M408 304.500H1660M408 388.500H1660M408 472.500H1660M408 555.500H1660M408 639.500H1660M408 722.500H1660M408 806.500H1660M408 890.500H1660M408 973.500H1660"/>
                    <path d="M415.500 297V982M661.500 297V982M908.500 297V982M1155.500 297V982M1402.500 297V982M1650.500 297V982"/>
                </g>
                <g stroke="#dcdcdc" stroke-width="1" stroke-dasharray="1 3">
                    <path d="M538.500 297V982M785.500 297V982M1032.500 297V982M1279.500 297V982M1527.500 297V982"/>
                </g>
                <!-- frame -->
                <path d="M408 297.500H1660.500V982" fill="none" stroke="#cfcfcf" stroke-width="1"/>
                <path d="M408.500 292V982.500H1660" fill="none" stroke="#111" stroke-width="1.200"/>
                <path d="M400 304.500H408M400 388.500H408M400 472.500H408M400 555.500H408M400 639.500H408M400 722.500H408M400 806.500H408M400 890.500H408M400 973.500H408" stroke="#111" stroke-width="1"/>
                <path d="M415.500 982V990M661.500 982V990M908.500 982V990M1155.500 982V990M1402.500 982V990M1650.500 982V990M538.500 982V987M785.500 982V987M1032.500 982V987M1279.500 982V987M1527.500 982V987" stroke="#111" stroke-width="1"/>
                <!-- series -->
                <path d="M415 427.500H1650" stroke="#f4b93c" stroke-width="1"/>
                <path d="M415 890V845H416.500V800H418V779.500H1651" fill="none" stroke="#a21ff0" stroke-width="3"/>
                <!-- labels -->
                <g font-size="19" fill="#000" text-anchor="end">
                    <text x="394" y="312">3.5</text>
                    <text x="394" y="396">3.0</text>
                    <text x="394" y="479">2.5</text>
                    <text x="394" y="563">2.0</text>
                    <text x="394" y="647">1.5</text>
                    <text x="394" y="730">1.0</text>
                    <text x="394" y="814">0.5</text>
                    <text x="394" y="898">0.0</text>
                    <text x="394" y="981">-0.5</text>
                </g>
                <g font-size="19" fill="#000" text-anchor="middle">
                    <text x="415" y="1010">0</text>
                    <text x="661" y="1010">2</text>
                    <text x="908" y="1010">4</text>
                    <text x="1155" y="1010">6</text>
                    <text x="1402" y="1010">8</text>
                    <text x="1650" y="1010">10</text>
                </g>
            </svg>
        </div>
    </div>

    <!-- Status bar -->
    <div class="h-[21px] bg-[#3c80bc] shrink-0"></div>
</body>
</html>
